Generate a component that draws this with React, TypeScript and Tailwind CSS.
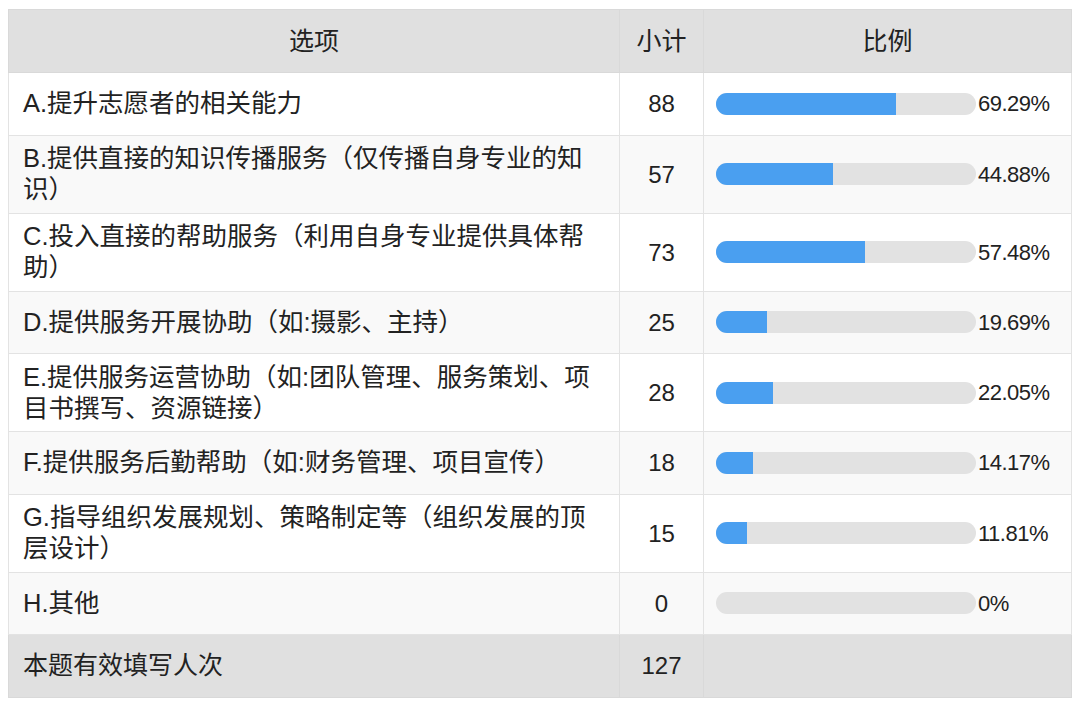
const rows = [
  { label: 'A.提升志愿者的相关能力', count: 88, pct: 69.29, text: '69.29%' },
  { label: 'B.提供直接的知识传播服务（仅传播自身专业的知识）', count: 57, pct: 44.88, text: '44.88%' },
  { label: 'C.投入直接的帮助服务（利用自身专业提供具体帮助）', count: 73, pct: 57.48, text: '57.48%' },
  { label: 'D.提供服务开展协助（如:摄影、主持）', count: 25, pct: 19.69, text: '19.69%' },
  { label: 'E.提供服务运营协助（如:团队管理、服务策划、项目书撰写、资源链接）', count: 28, pct: 22.05, text: '22.05%' },
  { label: 'F.提供服务后勤帮助（如:财务管理、项目宣传）', count: 18, pct: 14.17, text: '14.17%' },
  { label: 'G.指导组织发展规划、策略制定等（组织发展的顶层设计）', count: 15, pct: 11.81, text: '11.81%' },
  { label: 'H.其他', count: 0, pct: 0, text: '0%' },
];

export default function App() {
  return (
    <div className="min-h-screen bg-white pt-[9px] pl-[8px] text-[#222] font-['Liberation_Sans','Noto_Sans_CJK_SC',sans-serif]">
      <table className="w-[1063px] table-fixed border-collapse">
        <colgroup>
          <col className="w-[611px]" />
          <col className="w-[84px]" />
          <col className="w-[368px]" />
        </colgroup>
        <thead>
          <tr className="h-[63px] bg-[#e0e0e0] text-[25px] leading-[32px]">
            <th className="border border-[#d9d9d9] font-normal text-center">选项</th>
            <th className="border border-[#d9d9d9] font-normal text-center">小计</th>
            <th className="border border-[#d9d9d9] font-normal text-center">比例</th>
          </tr>
        </thead>
        <tbody>
          {rows.map((r, i) => (
            <tr key={r.label} className={'h-[62.5px] text-[25.5px] leading-[31px] ' + (i % 2 === 1 ? 'bg-[#f9f9f9]' : 'bg-white')}>
              <td className="border border-[#e3e3e3] pl-[14px] pr-[18px] py-[7.5px] align-middle">{r.label}</td>
              <td className="border border-[#e3e3e3] text-center align-middle text-[24px]">{r.count}</td>
              <td className="border border-[#e3e3e3] pl-[12px] align-middle">
                <div className="flex items-center">
                  <div className="w-[260px] h-[22px] rounded-full bg-[#e2e2e2] overflow-hidden">
                    <div className="h-full bg-[#4a9ff0]" style={{ width: r.pct + '%' }} />
                  </div>
                  <span className="ml-[2px] text-[22px] tracking-[-0.5px]">{r.text}</span>
                </div>
              </td>
            </tr>
          ))}
          <tr className="h-[63px] bg-[#e0e0e0] text-[25px]">
            <td className="border border-[#d9d9d9] pl-[14px]">本题有效填写人次</td>
            <td className="border border-[#d9d9d9] text-center text-[24px]">127</td>
            <td className="border border-[#d9d9d9]"></td>
          </tr>
        </tbody>
      </table>
    </div>
  );
}
